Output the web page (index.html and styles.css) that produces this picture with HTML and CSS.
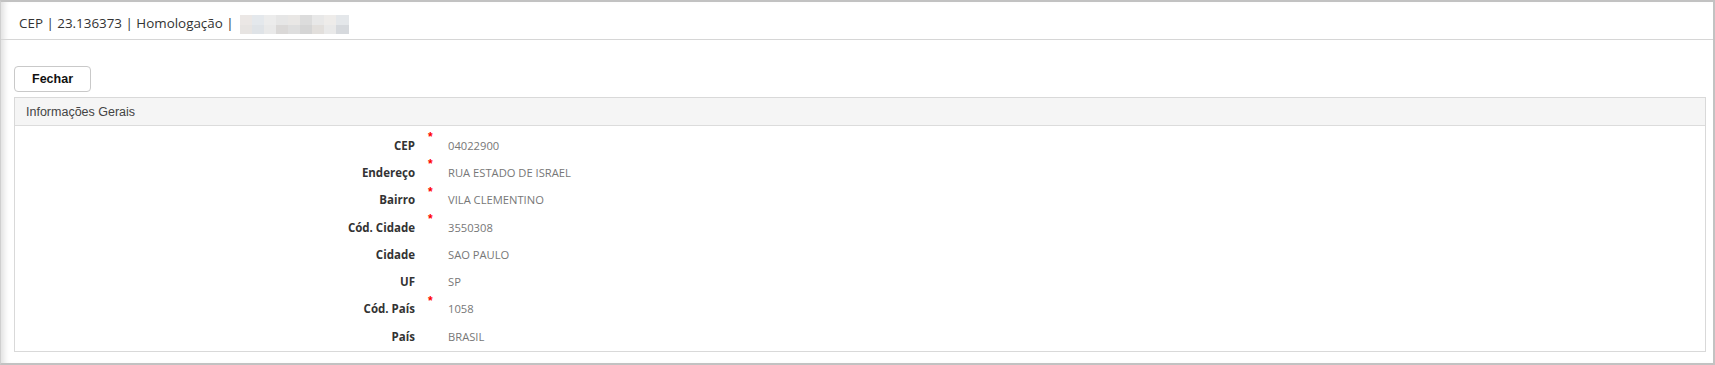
FILE: index.html
```html
<!DOCTYPE html>
<html lang="pt-BR">
<head>
<meta charset="utf-8">
<title>CEP</title>
<link rel="stylesheet" href="styles.css">
</head>
<body>
<div class="frame">
  <header class="topbar">
    <span class="crumbs">CEP | 23.136373 | Homologação |</span>
    <span class="mosaic">
      <i class="c1"></i><i class="c2"></i><i class="c3"></i><i class="c4"></i><i class="c5"></i><i class="c6"></i><i class="c7"></i><i class="c8"></i><i class="c9"></i>
      <i class="d1"></i><i class="d2"></i><i class="d3"></i><i class="d4"></i><i class="d5"></i><i class="d6"></i><i class="d7"></i><i class="d8"></i><i class="d9"></i>
    </span>
  </header>
  <main class="content">
    <button class="btn" type="button">Fechar</button>
    <section class="panel">
      <div class="panel-heading">Informações Gerais</div>
      <div class="form-grid">
        <span class="label">CEP</span><span class="req">*</span><span class="value">04022900</span>
        <span class="label">Endereço</span><span class="req">*</span><span class="value">RUA ESTADO DE ISRAEL</span>
        <span class="label">Bairro</span><span class="req">*</span><span class="value">VILA CLEMENTINO</span>
        <span class="label">Cód. Cidade</span><span class="req">*</span><span class="value">3550308</span>
        <span class="label">Cidade</span><span class="req"></span><span class="value">SAO PAULO</span>
        <span class="label">UF</span><span class="req"></span><span class="value">SP</span>
        <span class="label">Cód. País</span><span class="req">*</span><span class="value">1058</span>
        <span class="label">País</span><span class="req"></span><span class="value">BRASIL</span>
      </div>
    </section>
  </main>
</div>
</body>
</html>
```

FILE: styles.css
```css
* { box-sizing: border-box; }
html, body { margin: 0; padding: 0; background: #fff; }
body { width: 1715px; height: 365px; overflow: hidden; }

.frame {
  width: 1715px;
  height: 365px;
  border-top: 2px solid #c2c2c2;
  border-right: 2px solid #c2c2c2;
  border-bottom: 2px solid #c2c2c2;
  border-left: 1px solid #cfcfcf;
  box-shadow: inset 7px 0 6px -4px rgba(0, 0, 0, 0.13);
  background: #fff;
}

.topbar {
  height: 38px;
  border-bottom: 1px solid #d6d6d6;
  display: flex;
  align-items: flex-start;
  padding: 13px 0 0 18px;
}
.crumbs {
  font-family: "Open Sans", sans-serif;
  font-size: 13.4px;
  line-height: 17px;
  color: #333;
  white-space: pre;
}
.mosaic {
  margin-left: 6px;
  width: 109px;
  height: 19px;
  display: grid;
  grid-template-columns: repeat(9, 1fr);
  grid-template-rows: 1fr 1fr;
}
.mosaic i { display: block; }
.c1 { background: #ebe7e5; } .c2 { background: #e4e8ec; } .c3 { background: #ececec; }
.c4 { background: #e6e6e6; } .c5 { background: #e9e7e5; } .c6 { background: #dcdcdc; }
.c7 { background: #e8e8e8; } .c8 { background: #eeecea; } .c9 { background: #e4e7ea; }
.d1 { background: #e7e4e2; } .d2 { background: #dfe3e7; } .d3 { background: #e9e9e9; }
.d4 { background: #dad8d7; } .d5 { background: #dedede; } .d6 { background: #d5d5d5; }
.d7 { background: #e2dfdc; } .d8 { background: #e9e9e9; } .d9 { background: #d6d9dd; }

.content {
  padding: 26px 7px 0 13px;
}

.btn {
  display: block;
  width: 77px;
  height: 26px;
  margin: 0;
  padding: 0;
  background: #fff;
  border: 1px solid #c9c9c9;
  border-radius: 4px;
  font-family: "Liberation Sans", Arial, sans-serif;
  font-weight: bold;
  font-size: 12.5px;
  color: #111;
}

.panel {
  margin-top: 5px;
  border: 1px solid #d9d9d9;
  height: 255px;
}
.panel-heading {
  height: 28px;
  background: #f5f5f5;
  border-bottom: 1px solid #dcdcdc;
  display: flex;
  align-items: center;
  padding: 0 0 0 11px;
  font-family: "Liberation Sans", Arial, sans-serif;
  font-size: 12.5px;
  color: #444;
}

.form-grid {
  display: grid;
  grid-template-columns: 400px 33px 1fr;
  grid-auto-rows: 27.3px;
  padding-top: 6px;
}
.label {
  align-self: center;
  text-align: right;
  font-family: "Open Sans", sans-serif;
  font-weight: 700;
  font-size: 11.5px;
  line-height: 14px;
  color: #333;
}
.req {
  align-self: start;
  padding-left: 13px;
  margin-top: -1px;
  font-family: "Liberation Sans", Arial, sans-serif;
  font-weight: bold;
  font-size: 12px;
  line-height: 12px;
  color: #f00;
}
.value {
  align-self: center;
  font-family: "Open Sans", sans-serif;
  font-size: 11.2px;
  line-height: 14px;
  color: #777;
}
```
